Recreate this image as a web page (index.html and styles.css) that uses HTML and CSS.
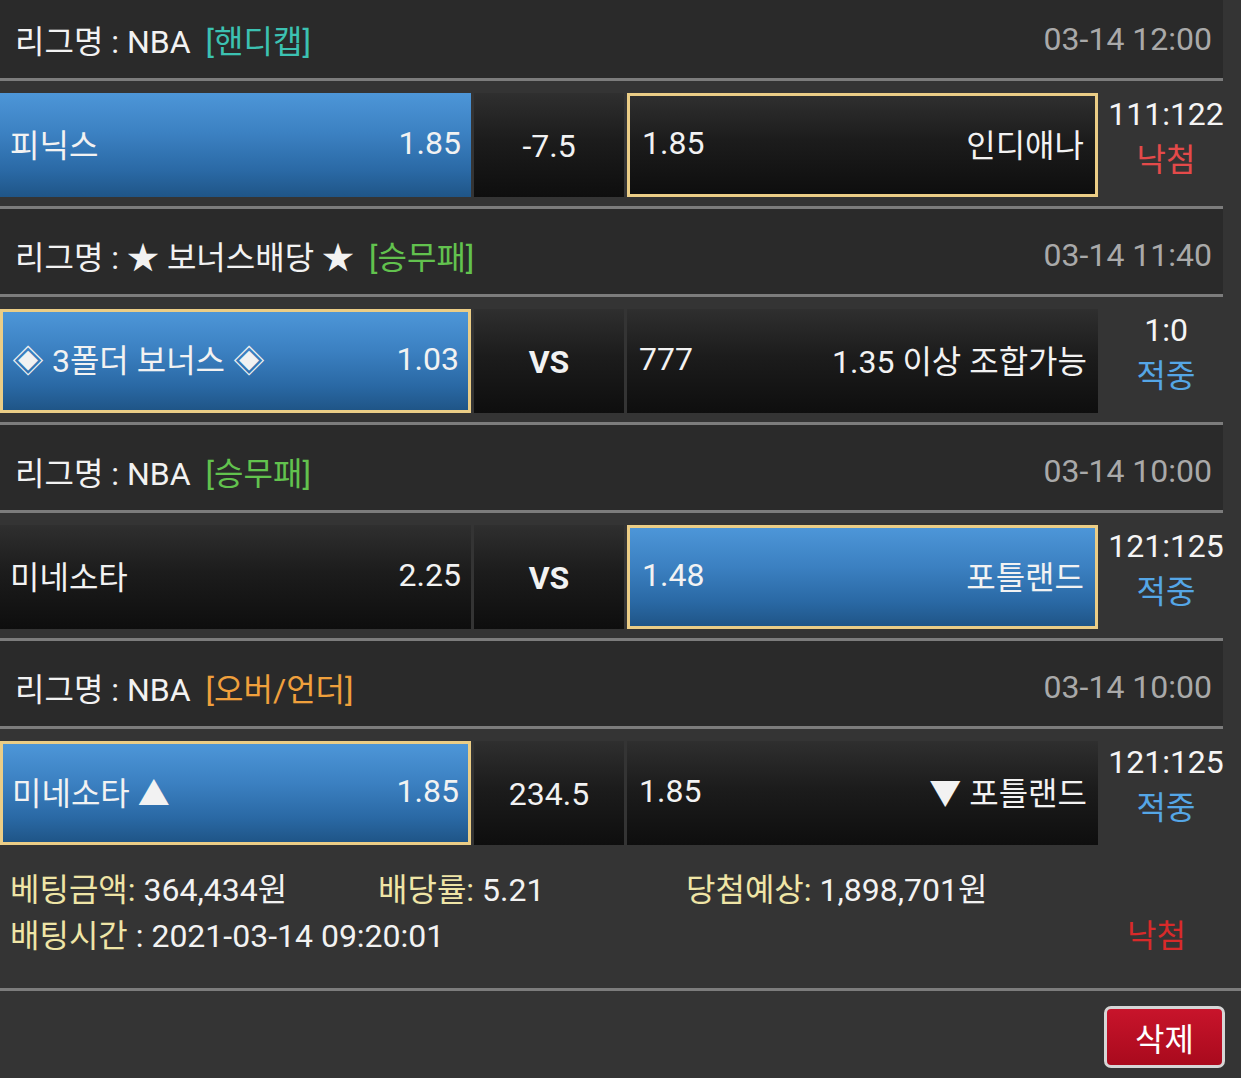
FILE: index.html
```html
<!DOCTYPE html>
<html lang="ko">
<head>
<meta charset="utf-8">
<title>베팅내역</title>
<link rel="stylesheet" href="styles.css">
</head>
<body>
<div class="games">
  <section class="game">
    <div class="league"><span>리그명 : NBA</span><span class="tag tag-handi">[핸디캡]</span><span class="time">03-14 12:00</span></div>
    <div class="match">
      <div class="pick pick-blue"><span>피닉스</span><span>1.85</span></div>
      <div class="mid">-7.5</div>
      <div class="pick pick-dark pick-sel"><span>1.85</span><span>인디애나</span></div>
      <div class="score"><span>111:122</span><span class="res-lose">낙첨</span></div>
    </div>
  </section>
  <section class="game">
    <div class="league"><span>리그명 : ★ 보너스배당 ★</span><span class="tag tag-win">[승무패]</span><span class="time">03-14 11:40</span></div>
    <div class="match">
      <div class="pick pick-blue pick-sel"><span>◈ 3폴더 보너스 ◈</span><span>1.03</span></div>
      <div class="mid mid-vs">VS</div>
      <div class="pick pick-dark"><span>777</span><span>1.35 이상 조합가능</span></div>
      <div class="score"><span>1:0</span><span class="res-win">적중</span></div>
    </div>
  </section>
  <section class="game">
    <div class="league"><span>리그명 : NBA</span><span class="tag tag-win">[승무패]</span><span class="time">03-14 10:00</span></div>
    <div class="match">
      <div class="pick pick-dark"><span>미네소타</span><span>2.25</span></div>
      <div class="mid mid-vs">VS</div>
      <div class="pick pick-blue pick-sel"><span>1.48</span><span>포틀랜드</span></div>
      <div class="score"><span>121:125</span><span class="res-win">적중</span></div>
    </div>
  </section>
  <section class="game">
    <div class="league"><span>리그명 : NBA</span><span class="tag tag-ou">[오버/언더]</span><span class="time">03-14 10:00</span></div>
    <div class="match">
      <div class="pick pick-blue pick-sel"><span>미네소타 ▲</span><span>1.85</span></div>
      <div class="mid">234.5</div>
      <div class="pick pick-dark"><span>1.85</span><span>▼ 포틀랜드</span></div>
      <div class="score"><span>121:125</span><span class="res-win">적중</span></div>
    </div>
  </section>
</div>
<div class="summary">
  <div class="summary-row">
    <span class="item item-amount"><span class="label">베팅금액:</span> 364,434원</span>
    <span class="item item-rate"><span class="label">배당률:</span> 5.21</span>
    <span class="item"><span class="label">당첨예상:</span> 1,898,701원</span>
  </div>
  <div class="summary-row">
    <span class="item"><span class="label">배팅시간</span> : 2021-03-14 09:20:01</span>
    <span class="summary-result">낙첨</span>
  </div>
</div>
<div class="actions">
  <button class="btn-del" type="button">삭제</button>
</div>
</body>
</html>
```
FILE: styles.css
```css
html, body {
  margin: 0;
  padding: 0;
}
body {
  background: #343434;
  color: #f2f2f2;
  font-family: Roboto, "Noto Sans CJK KR", sans-serif;
  font-size: 32px;
  overflow: hidden;
}
.games {
  width: 1223px;
  margin-top: -7px;
}
.game + .game .league {
  border-top: 3px solid #7c7c7c;
}
.league {
  display: flex;
  align-items: center;
  box-sizing: content-box;
  height: 79px;
  padding: 6px 11px 0 15px;
  background: #2a2a2a;
  border-bottom: 3px solid #7c7c7c;
  white-space: nowrap;
}
.tag {
  margin-left: 15px;
}
.tag-handi { color: #3cc2b2; }
.tag-win { color: #62c24e; }
.tag-ou { color: #f0a03c; }
.time {
  margin-left: auto;
  color: #a9a9a9;
}
.match {
  display: grid;
  grid-template-columns: 471px 150px 471px 130px;
  column-gap: 3px;
  align-items: start;
  height: 125px;
}
.pick, .mid {
  margin-top: 12px;
  height: 104px;
  box-sizing: border-box;
  display: flex;
  align-items: center;
  white-space: nowrap;
}
.pick {
  justify-content: space-between;
  padding: 0 10px 4px 10px;
}
.pick-dark, .mid {
  background: linear-gradient(#2f2f2f 0%, #1c1c1c 45%, #0e0e0e 100%);
}
.pick-blue {
  background: linear-gradient(#4d96d8 0%, #3b80c1 40%, #2a69a5 75%, #1f5587 100%);
}
.pick-sel {
  border: 3px solid #ebcd86;
  padding: 0 9px 4px 9px;
}
.match .pick:nth-child(3) {
  padding-left: 12px;
  padding-right: 11px;
}
.mid {
  justify-content: center;
  padding-top: 2px;
}
.mid-vs {
  font-weight: bold;
}
.score {
  align-self: stretch;
  display: flex;
  flex-direction: column;
  align-items: center;
  justify-content: center;
  padding-bottom: 14px;
  line-height: 46px;
  color: #f5f5f5;
  white-space: nowrap;
}
.res-lose { color: #e44a4a; }
.res-win { color: #55a6e6; }
.summary {
  padding: 13px 55px 29px 10px;
  line-height: 46px;
  border-bottom: 3px solid #7c7c7c;
  white-space: nowrap;
}
.summary-row {
  display: flex;
}
.item-amount { width: 368px; }
.item-rate { width: 308px; }
.label { color: #efe5a6; }
.summary-result {
  margin-left: auto;
  color: #d82a2a;
}
.actions {
  display: flex;
  justify-content: flex-end;
  padding: 15px 16px 0 0;
}
.btn-del {
  width: 121px;
  height: 62px;
  background: linear-gradient(#c8142b, #a90a1d);
  border: 3px solid #d6d6d6;
  border-radius: 7px;
  color: #fff;
  font-family: Roboto, "Noto Sans CJK KR", sans-serif;
  font-size: 32px;
  padding: 0;
}
```
